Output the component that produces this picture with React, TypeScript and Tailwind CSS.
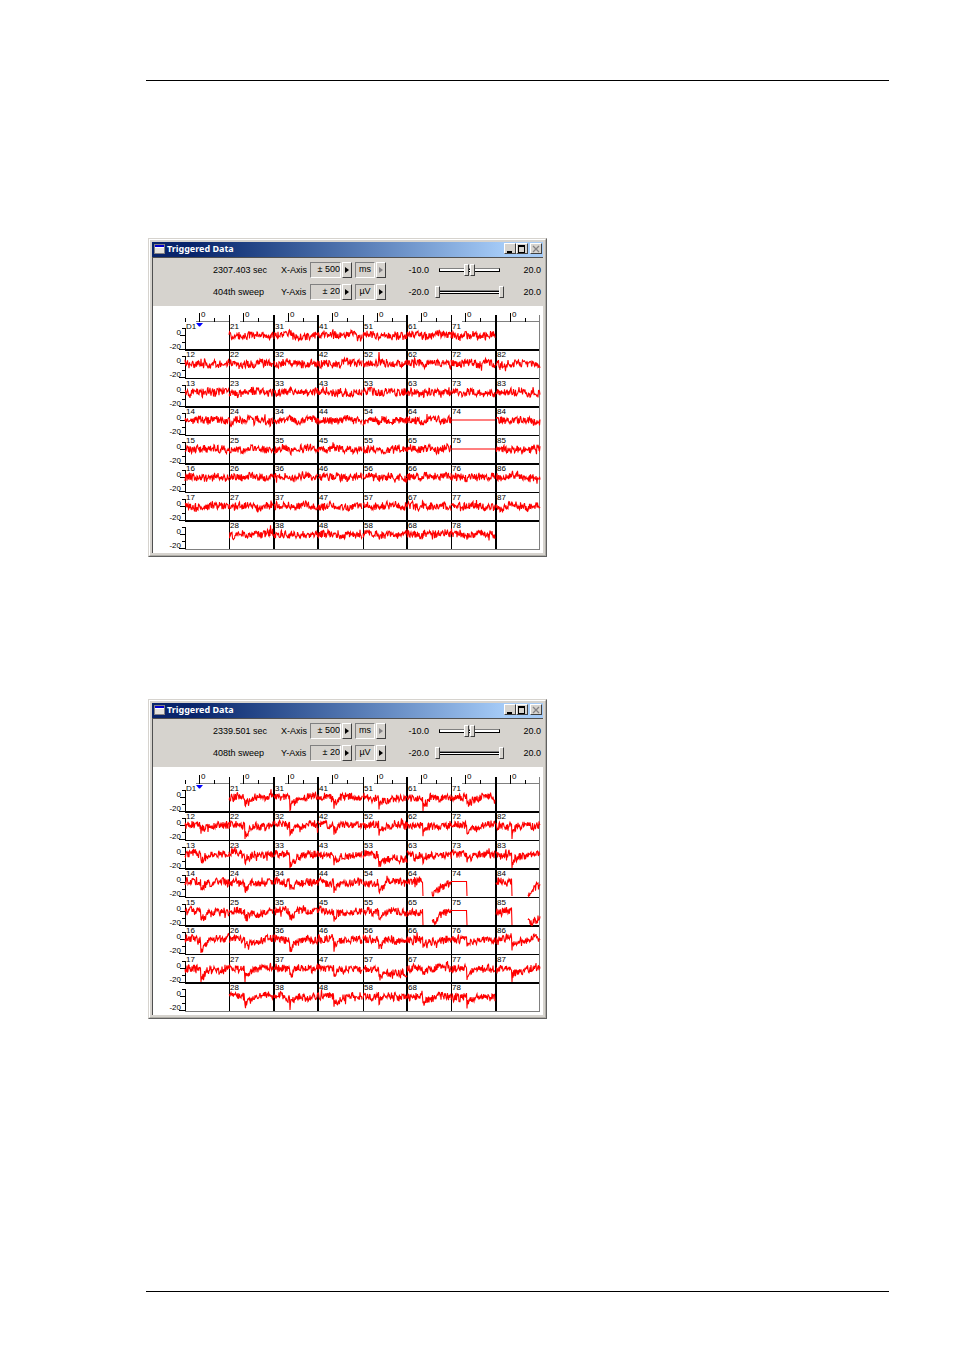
import { useId } from "react"
import { clsx } from "clsx"

interface SweepPanelProps {
  time: string
  sweep: string
  seed: number
  headroom: number
  responses: Record<string, Response>
}

interface Response {
  kind: "dip" | "step" | "clip" | "drop" | "flat" | "spike"
  depth?: number
  until?: number
  end?: number
}

const COL = 44.375
const ROW = 28.5
const LEFT = 32
const TOP = 15
const STIM = 16

const dip = (depth: number): Response => ({ kind: "dip", depth })

const restingResponses: Record<string, Response> = {
  "52": { kind: "spike" },
  "74": { kind: "flat" },
  "75": { kind: "flat" },
}

const evokedResponses: Record<string, Response> = {
  "21": dip(8), "31": dip(11), "41": dip(9), "51": dip(9), "61": dip(11), "71": dip(9),
  "12": dip(6), "22": dip(12), "32": dip(13), "42": dip(9), "52": dip(9), "62": dip(10), "72": dip(10), "82": dip(11),
  "13": dip(9), "23": dip(9), "33": dip(12), "43": dip(10), "53": { kind: "step", depth: 5 }, "63": dip(9), "73": dip(9), "83": dip(14),
  "14": dip(9), "24": dip(10), "34": dip(9), "44": dip(12), "54": dip(11),
  "64": { kind: "clip", until: 25, end: 1 }, "74": { kind: "drop" }, "84": { kind: "clip", until: 32, end: 0 },
  "15": dip(11), "25": dip(10), "35": dip(10), "45": dip(11), "55": dip(9),
  "65": { kind: "clip", until: 25, end: 0 }, "75": { kind: "drop" }, "85": { kind: "clip", until: 32, end: 8 },
  "16": dip(14), "26": dip(10), "36": dip(14), "46": dip(11), "56": dip(10), "66": dip(9), "76": dip(10), "86": dip(14),
  "17": dip(12), "27": dip(10), "37": dip(10), "47": dip(11), "57": { kind: "step", depth: 5 }, "67": dip(7), "77": dip(12), "87": dip(12),
  "28": dip(12), "38": dip(9), "48": dip(12), "58": dip(8), "68": dip(11), "78": dip(11),
}

const hasChannel = (col: number, row: number) => !((col === 1 || col === 8) && (row === 1 || row === 8))

function createRandom(seed: number) {
  let state = seed
  return () => {
    state = (state * 1664525 + 1013904223) >>> 0
    return state / 4294967296
  }
}

// Trace in cell coordinates, the zero line lies at y = 14
function buildTrace(seed: number, response?: Response) {
  const random = createRandom(seed)
  for (let i = 0; i < 5; i++) random()
  const phase = random() * 6.28
  const speed = 0.15 + random() * 0.2
  let wander = 0
  let path = ""
  let penDown = false

  for (let x = 0; x <= COL; x += 0.5) {
    wander = wander * 0.85 + (random() - 0.5) * 1.6
    let y = 14.3 + Math.sin(x * speed + phase) * 0.8 + wander + (random() - 0.5) * 7.5
    if (random() > 0.95) y += (random() - 0.5) * 8
    const after = x - STIM
    let lift = false

    if (response?.kind === "flat") y = 14
    if (response?.kind === "spike" && after === 0) y = 3
    if (response?.kind === "dip" && after >= 0) {
      const depth = response.depth ?? 0
      y += after < 0.5 ? depth : depth * 0.75 * Math.exp(-after / 5)
    }
    if (response?.kind === "step" && after >= 0) {
      y += (response.depth ?? 0) + 5 * Math.exp(-after / 2)
    }
    if (response?.kind === "drop") {
      if (after > 0) break
      y = after < 0 ? 13.5 : 28
    }
    if (response?.kind === "clip" && after >= 0) {
      const until = response.until ?? COL
      const end = response.end ?? 0
      if (x < until) {
        y = 28
        lift = after > 0
      } else {
        y += end + (13 - end) * Math.exp(-(x - until) / 6)
      }
    }

    if (lift) {
      penDown = false
      continue
    }
    path += `${penDown ? "L" : "M"}${x.toFixed(1)} ${Math.max(3, Math.min(28, y)).toFixed(1)}`
    penDown = true
  }
  return path
}

function ElectrodeGrid({ seed, headroom, responses }: Pick<SweepPanelProps, "seed" | "headroom" | "responses">) {
  const steps = [1, 2, 3, 4, 5, 6, 7, 8]
  const right = LEFT + COL * 8
  const bottom = TOP + ROW * 8

  return (
    <svg
      viewBox={`0 ${-headroom} 390 ${247 + headroom}`}
      className="block w-full bg-white font-['Liberation_Sans',sans-serif] text-[8px]"
      role="img"
      aria-label="Electrode sweeps"
    >
      <g shapeRendering="crispEdges" stroke="black" fill="none">
        {/* Time ruler */}
        <path d={`M${LEFT + 2} ${TOP + 0.5}H${right}`} stroke="#808080" />
        {steps.map((col) => {
          const x = Math.round(LEFT + (col - 1) * COL) + 0.5
          return <path key={col} d={`M${x} ${TOP + 1}v-4M${x + 14} ${TOP + 1}v-9M${x + 29} ${TOP + 1}v-4`} />
        })}

        {/* Cell borders */}
        {steps.slice(0, 7).map((col) => {
          const thin = col === 1 || col === 4 || col === 6
          return (
            <rect
              key={col}
              x={Math.round(LEFT + col * COL) - (thin ? 0 : 1)}
              y={TOP - 6}
              width={thin ? 1 : 2}
              height={ROW * 8 + 6}
              fill="black"
              stroke="none"
            />
          )
        })}
        {steps.slice(0, 7).map((row) => (
          <rect
            key={row}
            x={LEFT}
            y={Math.floor(TOP + row * ROW)}
            width={COL * 8}
            height={row % 2 === 1 ? 2 : 1}
            fill="black"
            stroke="none"
          />
        ))}
        <path d={`M${LEFT} ${bottom + 0.5}H${right - 0.5}V${TOP - 6}`} stroke="#808080" />

        {/* Voltage ticks */}
        {steps.map((row) => {
          const y = Math.floor(TOP + (row - 1) * ROW)
          return (
            <path
              key={row}
              d={`M${LEFT + 0.5} ${y + 7}v22M${LEFT} ${y + 7.5}h-3M${LEFT} ${y + 14.5}h-5M${LEFT} ${y + 21.5}h-3M${LEFT} ${y + 28.5}h-6`}
            />
          )
        })}
      </g>

      {steps.map((col) => (
        <text key={col} x={Math.round(LEFT + (col - 1) * COL) + 16} y={TOP - 4}>
          0
        </text>
      ))}
      {steps.map((row) => {
        const y = Math.floor(TOP + (row - 1) * ROW)
        return (
          <g key={row} textAnchor="end">
            <text x={28} y={y + 14}>0</text>
            <text x={28} y={y + 28}>-20</text>
          </g>
        )
      })}

      {steps.flatMap((row) =>
        steps.map((col) => {
          const corner = col === 1 && row === 1
          if (!hasChannel(col, row) && !corner) return null
          const id = `${col}${row}`
          const x = Math.round(LEFT + (col - 1) * COL)
          const y = Math.floor(TOP + (row - 1) * ROW)
          return (
            <g key={id} transform={`translate(${x} ${y})`}>
              <rect x={1} y={row === 1 ? 0 : 2} width={10} height={7} fill="white" />
              <text x={1} y={8}>{corner ? "D1" : id}</text>
              {!corner && (
                <path
                  d={buildTrace(seed + col * 7919 + row * 104729, responses[id])}
                  fill="none"
                  stroke="#ff0000"
                  strokeWidth={1.1}
                />
              )}
            </g>
          )
        })
      )}
      <path d={`M${LEFT + 11} ${TOP + 2}h7l-3 3.5h-1z`} fill="#0000ff" />
    </svg>
  )
}

function Stepper({ label, disabled }: { label: string; disabled?: boolean }) {
  return (
    <button
      type="button"
      aria-label={label}
      disabled={disabled}
      className={clsx(
        "flex h-4 w-[10px] items-center justify-center border border-t-white border-l-white border-r-[#404040] border-b-[#404040] bg-[#d6d3ce]",
        disabled ? "text-[#848284]" : "text-black"
      )}
    >
      <svg viewBox="0 0 4 6" className="h-[6px] w-1" fill="currentColor">
        <path d="M0 0l4 3l-4 3z" />
      </svg>
    </button>
  )
}

const thumb =
  "pointer-events-none absolute inset-0 h-3 w-full appearance-none bg-transparent [&::-webkit-slider-thumb]:pointer-events-auto [&::-webkit-slider-thumb]:h-3 [&::-webkit-slider-thumb]:w-[5px] [&::-webkit-slider-thumb]:appearance-none [&::-webkit-slider-thumb]:border [&::-webkit-slider-thumb]:border-t-white [&::-webkit-slider-thumb]:border-l-white [&::-webkit-slider-thumb]:border-r-[#404040] [&::-webkit-slider-thumb]:border-b-[#404040] [&::-webkit-slider-thumb]:bg-[#d6d3ce]"

function RangeSlider({ label, low, high }: { label: string; low: number; high: number }) {
  return (
    <div className="relative flex h-3 w-[69px] items-center px-1">
      <div className="flex h-1 w-full flex-col border-x border-t border-b border-x-black border-t-[#808080] border-b-black bg-white">
        <div className="h-px bg-black" style={{ marginLeft: `${low}%`, width: `${high - low}%` }} />
      </div>
      <input type="range" aria-label={`${label} from`} defaultValue={low} className={thumb} />
      <input type="range" aria-label={`${label} to`} defaultValue={high} className={thumb} />
    </div>
  )
}

interface AxisRowProps {
  readout: string
  axis: string
  span: string
  unit: string
  unitDisabled?: boolean
  from: string
  to: string
  low: number
  high: number
}

const field =
  "h-4 border border-t-[#808080] border-l-[#808080] border-r-white border-b-white bg-transparent pb-[2px] outline-none"

function AxisRow({ readout, axis, span, unit, unitDisabled, from, to, low, high }: AxisRowProps) {
  const id = useId()
  return (
    <div className="flex h-[22px] items-center pr-[2px]">
      <span className="w-32 pl-[60px] whitespace-nowrap">{readout}</span>
      <label htmlFor={id} className="w-[29px] whitespace-nowrap">{axis}</label>
      <input id={id} defaultValue={span} className={clsx(field, "mr-px w-[31px] text-right")} />
      <Stepper label={`${axis} range`} />
      <input aria-label={`${axis} unit`} defaultValue={unit} className={clsx(field, "mr-px ml-[3px] w-5 text-center")} />
      <Stepper label={`${axis} next unit`} disabled={unitDisabled} />
      <span className="mr-[6px] ml-auto">{from}</span>
      <RangeSlider label={axis} low={low} high={high} />
      <span className="w-[37px] text-right">{to}</span>
    </div>
  )
}

const titleButton =
  "flex h-[11px] w-3 items-center justify-center border border-t-white border-l-white border-r-[#404040] border-b-[#404040] bg-[#d6d3ce]"

function TitleBar() {
  return (
    <div className="flex h-[15px] items-center bg-linear-to-r from-[#08246b] from-10% to-[#a5cbf7] to-90% pr-px pb-[2px] pl-[2px]">
      <svg viewBox="0 0 11 10" className="h-[10px] w-[11px]" shapeRendering="crispEdges">
        <rect width="11" height="10" fill="#848284" />
        <rect x="1" y="1" width="9" height="8" fill="white" />
        <rect x="1" y="1" width="9" height="2" fill="#0000d0" />
        <rect x="1" y="4" width="9" height="5" fill="#e4e2dc" />
      </svg>
      <h2 className="ml-[2px] flex-1 font-['Noto_Sans',sans-serif] text-[9px] font-bold text-white">Triggered Data</h2>
      <button type="button" aria-label="Minimize" className={titleButton}>
        <svg viewBox="0 0 8 8" className="size-2" shapeRendering="crispEdges">
          <path d="M1 6h5v2h-5z" />
        </svg>
      </button>
      <button type="button" aria-label="Maximize" className={titleButton}>
        <svg viewBox="0 0 8 8" className="size-2" shapeRendering="crispEdges">
          <path d="M0 0h7v8h-7zM1 2v5h5v-5z" fillRule="evenodd" />
        </svg>
      </button>
      <button type="button" aria-label="Close" className={clsx(titleButton, "ml-[2px]")}>
        <svg viewBox="0 0 8 8" className="size-2" stroke="#848284" strokeWidth="1.3">
          <path d="M1 1l6 6M7 1l-6 6" />
        </svg>
      </button>
    </div>
  )
}

function SweepPanel({ time, sweep, seed, headroom, responses }: SweepPanelProps) {
  return (
    <section className="w-full max-w-[399px] border border-t-[#d6d3ce] border-l-[#d6d3ce] border-r-[#606060] border-b-[#606060] bg-[#d6d3ce] font-['Liberation_Sans',sans-serif] text-[9px] leading-3 text-black">
      <div className="border border-t-white border-l-white border-r-[#b0aea8] border-b-[#b0aea8] p-[2px]">
        <TitleBar />
        <div className="border-t border-l border-[#505050]">
          <div className="pt-px pb-[3px]">
            <AxisRow readout={time} axis="X-Axis" span="± 500" unit="ms" unitDisabled from="-10.0" to="20.0" low={45} high={54} />
            <AxisRow readout={sweep} axis="Y-Axis" span="± 20" unit="µV" from="-20.0" to="20.0" low={0} high={100} />
          </div>
          <ElectrodeGrid seed={seed} headroom={headroom} responses={responses} />
        </div>
      </div>
    </section>
  )
}

export default function App() {
  return (
    <div className="flex min-h-screen flex-col bg-white pt-20 pr-[65px] pb-[58px] pl-[146px]">
      <hr className="border-t border-black" />
      <main className="flex flex-col gap-[142px] pt-[157px] pb-20 pl-[2px]">
        <SweepPanel time="2307.403 sec" sweep="404th sweep" seed={11} headroom={0} responses={restingResponses} />
        <SweepPanel time="2339.501 sec" sweep="408th sweep" seed={57} headroom={1} responses={evokedResponses} />
      </main>
      <hr className="mt-auto border-t border-black" />
    </div>
  )
}
